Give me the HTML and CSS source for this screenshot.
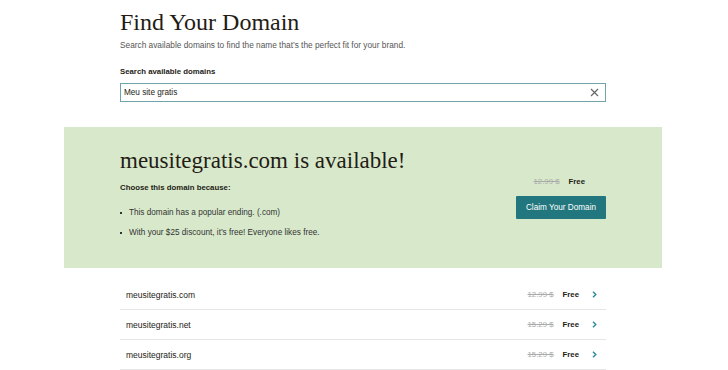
FILE: index.html
```html
<!DOCTYPE html>
<html lang="en">
<head>
    <meta charset="UTF-8">
    <title>Find Your Domain</title>
    <link rel="stylesheet" href="styles.css">
</head>
<body>
    <div class="page">
        <div class="search">
            <h1>Find Your Domain</h1>
            <p class="intro">Search available domains to find the name that’s the perfect fit for your brand.</p>
            <label class="label" for="q">Search available domains</label>
            <div class="field">
                <input id="q" type="text" value="Meu site gratis">
                <svg class="clear" width="9" height="9" viewBox="0 0 9 9"><path d="M1 1L8 8M8 1L1 8" stroke="#666" stroke-width="1.2"/></svg>
            </div>
        </div>

        <div class="featured">
            <div class="featured-inner">
                <div class="featured-text">
                    <h2>meusitegratis.com is available!</h2>
                    <p class="why">Choose this domain because:</p>
                    <ul>
                        <li>This domain has a popular ending. (.com)</li>
                        <li>With your $25 discount, it’s free! Everyone likes free.</li>
                    </ul>
                </div>
                <div class="featured-buy">
                    <div class="price"><s>12.99 $</s><span>Free</span></div>
                    <button>Claim Your Domain</button>
                </div>
            </div>
        </div>

        <ul class="results">
            <li>
                <span class="name">meusitegratis.com</span>
                <span class="price"><s>12.99 $</s><span>Free</span></span>
                <svg class="chev" width="5" height="7" viewBox="0 0 5 7"><path d="M1 0.8L3.8 3.5L1 6.2" fill="none" stroke="#2a8a96" stroke-width="1.4"/></svg>
            </li>
            <li>
                <span class="name">meusitegratis.net</span>
                <span class="price"><s>15.29 $</s><span>Free</span></span>
                <svg class="chev" width="5" height="7" viewBox="0 0 5 7"><path d="M1 0.8L3.8 3.5L1 6.2" fill="none" stroke="#2a8a96" stroke-width="1.4"/></svg>
            </li>
            <li>
                <span class="name">meusitegratis.org</span>
                <span class="price"><s>15.29 $</s><span>Free</span></span>
                <svg class="chev" width="5" height="7" viewBox="0 0 5 7"><path d="M1 0.8L3.8 3.5L1 6.2" fill="none" stroke="#2a8a96" stroke-width="1.4"/></svg>
            </li>
        </ul>
    </div>
</body>
</html>
```

FILE: styles.css
```css
body {
    margin: 0;
    font-family: "Liberation Sans", Arial, sans-serif;
    color: #241c15;
    background: #fff;
}
.page {
    width: 728px;
}
.search {
    width: 486px;
    margin-left: 120px;
    padding-top: 8px;
}
h1 {
    font-family: "Liberation Serif", "DejaVu Serif", serif;
    font-weight: normal;
    font-size: 24px;
    line-height: 28px;
    margin: 0 0 3px;
}
.intro {
    font-size: 8.3px;
    line-height: 12px;
    color: #555;
    margin: 0 0 15px;
}
.label {
    display: block;
    font-size: 7.8px;
    line-height: 12px;
    font-weight: bold;
    margin-bottom: 5px;
}
.field {
    position: relative;
}
.field input {
    display: block;
    box-sizing: border-box;
    width: 100%;
    height: 19px;
    border: 1px solid #6ea4aa;
    padding: 0 3px;
    font-family: inherit;
    font-size: 8.2px;
    color: #241c15;
    outline: none;
}
.clear {
    position: absolute;
    right: 7px;
    top: 5px;
}
.featured {
    margin: 25px 66px 0 64px;
    background: #d8e9cb;
    height: 141px;
}
.featured-inner {
    display: flex;
    justify-content: space-between;
    margin: 0 56px;
    padding-top: 20px;
}
h2 {
    font-family: "Liberation Serif", "DejaVu Serif", serif;
    font-weight: normal;
    font-size: 23px;
    line-height: 28px;
    margin: 0 0 7px;
}
.why {
    font-size: 7.8px;
    line-height: 12px;
    font-weight: bold;
    margin: 0 0 13px;
}
.featured ul {
    margin: 0;
    padding: 0 0 0 9px;
    list-style: none;
}
.featured li {
    font-size: 8.2px;
    line-height: 12px;
    color: #333;
    margin-bottom: 8px;
    position: relative;
}
.featured li::before {
    content: "";
    position: absolute;
    left: -9px;
    top: 5px;
    width: 2px;
    height: 2px;
    background: #333;
}
.featured-buy {
    display: flex;
    flex-direction: column;
    align-items: flex-end;
    padding-top: 29px;
}
.price {
    font-size: 7.8px;
    line-height: 12px;
    font-weight: bold;
}
.price s {
    font-weight: normal;
    color: #aaa;
    margin-right: 9px;
}
.featured-buy .price {
    margin-right: 21px;
}
.featured-buy button {
    margin-top: 8px;
    width: 90px;
    height: 23px;
    background: #22777e;
    color: #fff;
    border: none;
    border-radius: 1px;
    font-family: inherit;
    font-size: 8.2px;
    cursor: pointer;
}
.results {
    list-style: none;
    margin: 12px 0 0 120px;
    padding: 0;
    width: 486px;
}
.results li {
    display: flex;
    align-items: center;
    height: 29px;
    border-bottom: 1px solid #e5e5e5;
    font-size: 8.5px;
}
.results .name {
    flex: 1;
    padding-left: 6px;
}
.chev {
    margin: 0 9px 0 13px;
}
```
